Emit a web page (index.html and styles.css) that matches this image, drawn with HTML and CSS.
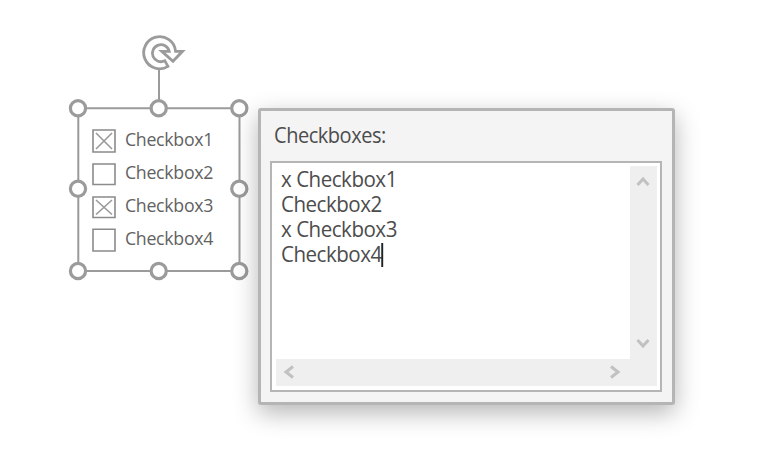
FILE: index.html
```html
<!DOCTYPE html>
<html lang="en">
<head>
<meta charset="utf-8">
<title>Checkboxes</title>
<link rel="stylesheet" href="styles.css">
</head>
<body>
<main class="canvas">
  <section class="selection">
    <svg class="frame" width="200" height="260" viewBox="60 25 200 260" fill="none" stroke="#9b9b9b">
      <path stroke-width="2" d="M159 69V108M78.3 108.3H239.5V271H78.3Z"/>
      <path stroke-width="2.8" d="M161.8 51.3H169.2A8.5 8.5 0 1 0 164.8 60.8L168 66.4A16 16 0 1 1 175.6 51.3H182.5L173 61.3Z"/>
      <g fill="#fff" stroke-width="3.2">
        <circle cx="78" cy="108.2" r="7.6"/><circle cx="158.7" cy="108.2" r="7.6"/><circle cx="239.3" cy="108.2" r="7.6"/>
        <circle cx="78" cy="188.8" r="7.6"/><circle cx="239.3" cy="188.8" r="7.6"/>
        <circle cx="78" cy="271" r="7.6"/><circle cx="158.7" cy="271" r="7.6"/><circle cx="239.3" cy="271" r="7.6"/>
      </g>
    </svg>
    <ul class="list">
      <li><svg class="box" viewBox="0 0 24 24"><path d="M1 1H23V23H1Z"/><path class="cross" d="M4 4L20 20M20 4L4 20"/></svg><span>Checkbox1</span></li>
      <li><svg class="box" viewBox="0 0 24 24"><path d="M1 2H23V22.5H1Z"/></svg><span>Checkbox2</span></li>
      <li><svg class="box" viewBox="0 0 24 24"><path d="M1 2H23V22.5H1Z"/><path class="cross" d="M4 5L20 19.5M20 5L4 19.5"/></svg><span>Checkbox3</span></li>
      <li><svg class="box" viewBox="0 0 24 24"><path d="M1 1.2H23V23H1Z"/></svg><span>Checkbox4</span></li>
    </ul>
  </section>
  <section class="panel">
    <h1 class="title">Checkboxes:</h1>
    <div class="editor">
      <div class="lines">
        <div>x Checkbox1</div>
        <div>Checkbox2</div>
        <div>x Checkbox3</div>
        <div>Checkbox4<i class="caret"></i></div>
      </div>
      <div class="vbar">
        <svg class="chev" viewBox="0 0 14 12"><path d="M1.5 10L7 4L12.5 10"/></svg>
        <svg class="chev" viewBox="0 0 14 12"><path d="M1.5 2L7 8L12.5 2"/></svg>
      </div>
      <div class="hbar">
        <svg class="chev side" viewBox="0 0 12 14"><path d="M10 1.5L3 7L10 12.5"/></svg>
        <svg class="chev side" viewBox="0 0 12 14"><path d="M2 1.5L9 7L2 12.5"/></svg>
      </div>
    </div>
  </section>
</main>
</body>
</html>
```
FILE: styles.css
```css
* { box-sizing: border-box; }
body {
  margin: 0;
  background: #fff;
  font-family: "Open Sans", "Noto Sans", sans-serif;
  color: #4c4c4c;
}
.canvas { position: relative; width: 773px; height: 465px; overflow: hidden; }
.selection { position: absolute; left: 60px; top: 25px; width: 200px; height: 260px; }
.frame { position: absolute; left: 0; top: 0; }
.list {
  position: relative;
  margin: 0;
  padding: 99px 0 0 32px;
  list-style: none;
}
.list li {
  display: flex;
  align-items: center;
  gap: 9px;
  height: 33px;
  font-size: 18px;
  line-height: 33px;
  letter-spacing: -0.3px;
  color: #626262;
}
.list span {
  margin-top: -3px;
  transform: scaleX(0.985);
  transform-origin: left;
}
.box { width: 24px; height: 24px; fill: #fff; stroke: #8b8b8b; stroke-width: 1.6; }
.box .cross { fill: none; stroke: #999; stroke-width: 1.6; }
.panel {
  position: absolute;
  left: 258px;
  top: 108px;
  width: 417px;
  height: 297px;
  padding: 11px 10px 10px 9px;
  background: #f4f4f4;
  border: 3px solid #b5b5b5;
  border-radius: 3px;
  box-shadow: 0 8px 24px rgba(0, 0, 0, 0.29);
}
.title {
  margin: 0;
  padding-left: 4px;
  height: 39px;
  font-size: 21.5px;
  font-weight: 400;
  line-height: 26px;
  letter-spacing: -0.5px;
  transform: scaleX(0.93);
  transform-origin: 4px 0;
}
.editor {
  display: grid;
  grid-template-columns: 1fr 27px;
  grid-template-rows: 1fr 27px;
  height: 231px;
  padding: 3px 3px 4px 4px;
  background: #fff;
  border: 2px solid #b5b5b5;
}
.lines {
  padding-left: 5px;
  font-size: 21.5px;
  line-height: 25px;
  letter-spacing: -0.5px;
  transform: scaleX(0.955);
  transform-origin: 5px 0;
}
.lines div { height: 25px; }
.caret {
  display: inline-block;
  width: 2px;
  height: 24px;
  margin-left: -1px;
  vertical-align: -5px;
  background: #222;
}
.vbar {
  display: flex;
  flex-direction: column;
  justify-content: space-between;
  align-items: center;
  padding: 9px 2px 9px 0;
  background: #efefef;
}
.hbar {
  grid-column: 1 / 3;
  display: flex;
  justify-content: space-between;
  align-items: center;
  padding: 0 36px 2px 7px;
  background: #efefef;
}
.chev { width: 14px; height: 12px; fill: none; stroke: #c1c1c1; stroke-width: 3; }
.side { width: 12px; height: 14px; }
```
